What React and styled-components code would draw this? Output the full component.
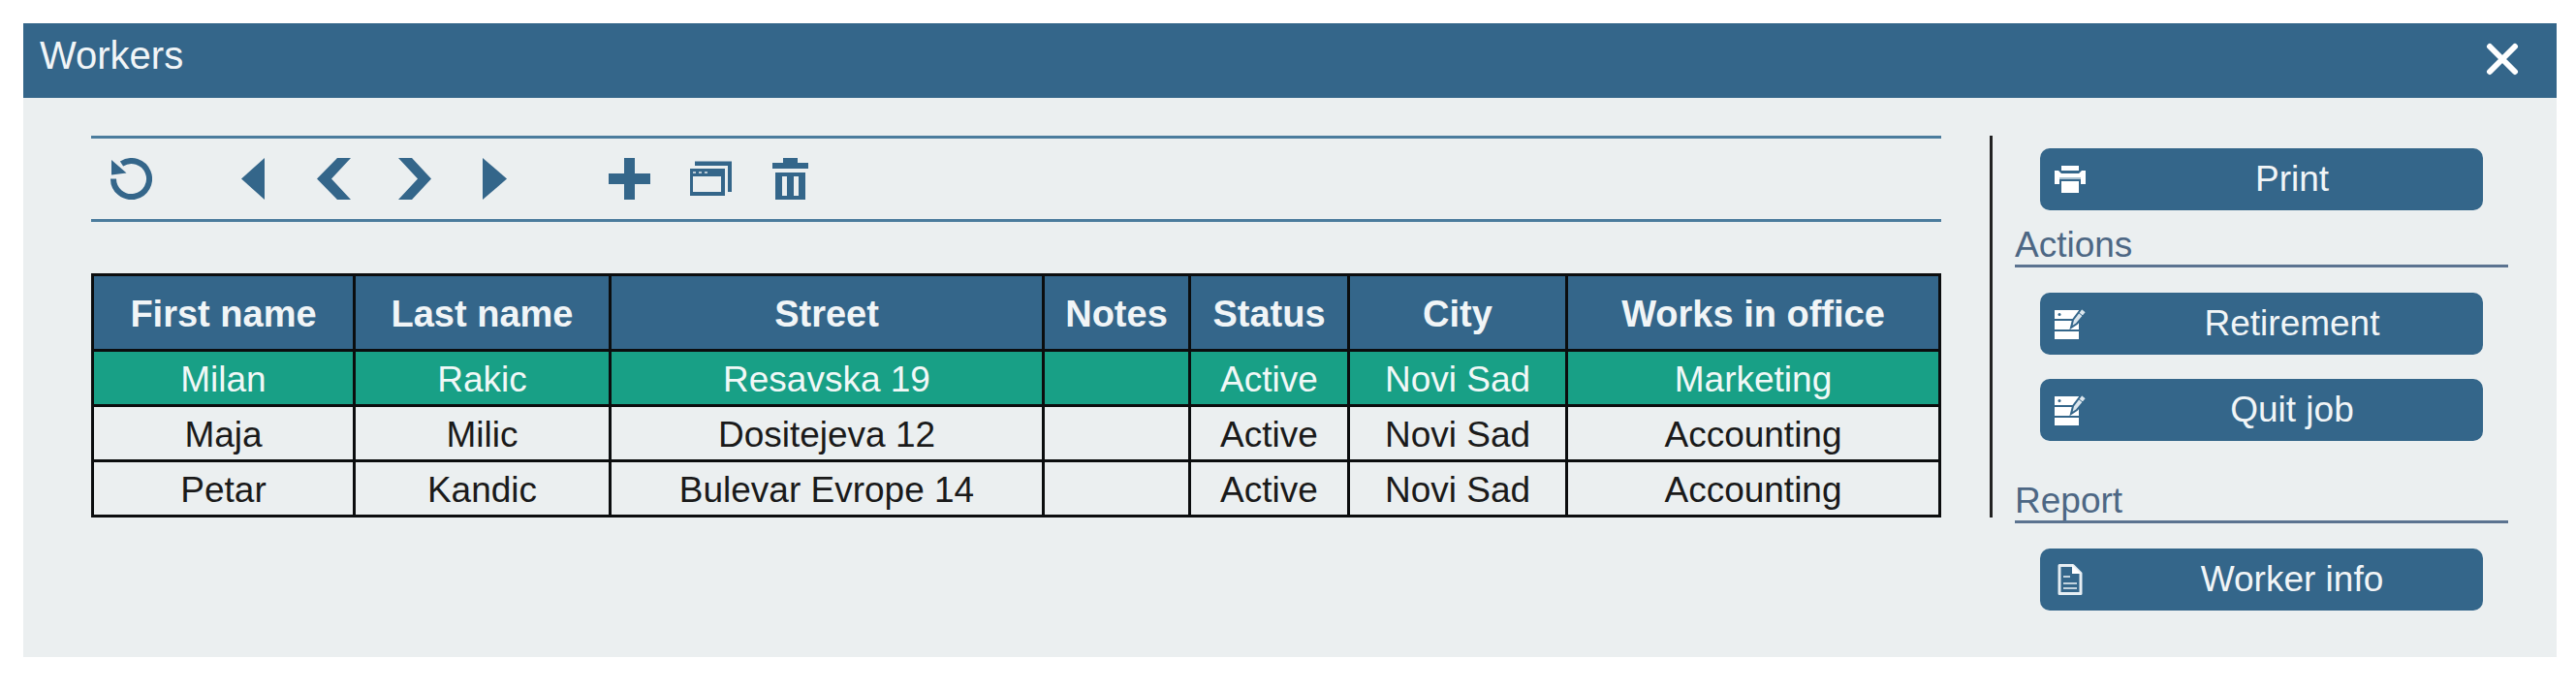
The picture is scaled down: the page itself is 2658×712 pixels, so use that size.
import styled, { createGlobalStyle } from 'styled-components';

const blue = '#34668a';

const GlobalStyle = createGlobalStyle`
  * {
    box-sizing: border-box;
  }

  body {
    margin: 0;
    padding: 24px 20px 34px 24px;
    background: #fff;
    font-family: "Liberation Sans", Arial, sans-serif;
    font-size: 37px;
    line-height: 44px;
  }
`

const Window = styled.section`
  background: #ebeff0;
`

const TitleBar = styled.header`
  display: flex;
  align-items: center;
  justify-content: space-between;
  height: 77px;
  padding: 0 39px 4px 17px;
  background: ${blue};
`

const Title = styled.h1`
  margin: 0;
  padding-bottom: 8px;
  color: #f1f5f7;
  font-size: 40px;
  font-weight: normal;
  line-height: 44px;
`

const IconButton = styled.button`
  display: flex;
  padding: 0;
  border: 0;
  background: none;
  color: ${({ $color }) => $color || blue};
  cursor: pointer;
`

const Content = styled.div`
  display: flex;
  align-items: flex-start;
  padding: 39px 50px 48px 70px;
`

const Main = styled.main`
  flex: 1;
  padding-right: 50px;
  border-right: 3px solid #222;
`

const Toolbar = styled.div`
  display: flex;
  align-items: center;
  height: 89px;
  margin-bottom: 53px;
  padding-left: 20px;
  border-top: 3px solid #4b7c9d;
  border-bottom: 3px solid #4b7c9d;
`

const ToolGroup = styled.div`
  display: flex;
  gap: 41px;
  margin-left: ${({ $space }) => $space || 0}px;
`

const Table = styled.table`
  width: 100%;
  table-layout: fixed;
  border-collapse: collapse;
  text-align: center;
`

const Col = styled.col`
  width: ${({ $width }) => $width}px;
`

const HeadCell = styled.th`
  height: 78px;
  padding: 2px 0 0;
  border: 3px solid #0b0d0e;
  background: ${blue};
  color: #f1f5f7;
  font-size: 38px;
`

const Row = styled.tr`
  background: ${({ $selected }) => ($selected ? '#18a086' : 'transparent')};
  color: ${({ $selected }) => ($selected ? '#f1f8f7' : '#1a1a1a')};
`

const Cell = styled.td`
  height: 57px;
  padding: 4px 0 0;
  border: 3px solid #0b0d0e;
`

const Sidebar = styled.aside`
  width: 532px;
  padding: 13px 0 0 23px;
`

const SideHeading = styled.h2`
  margin: ${({ $top }) => $top}px 0 26px;
  border-bottom: 3px solid #5b7390;
  color: #4d6784;
  font-size: 37px;
  font-weight: normal;
  line-height: 40px;
`

const ButtonStack = styled.div`
  display: flex;
  flex-direction: column;
  gap: 25px;
  padding: 0 26px;
`

const ActionButton = styled.button`
  display: flex;
  align-items: center;
  height: 64px;
  padding: 0 0 0 15px;
  border: 0;
  border-radius: 10px;
  background: ${blue};
  color: #f1f5f7;
  font: inherit;
  cursor: pointer;
`

const ActionLabel = styled.span`
  flex: 1;
  padding-left: 16px;
`

const ToolSvg = ({ children }) => (
  <svg width="43" height="43" viewBox="0 0 43 43" fill="currentColor" aria-hidden="true">{children}</svg>
)

const ActionSvg = ({ children }) => (
  <svg width="32" height="32" viewBox="0 0 32 32" fill="#fff" aria-hidden="true">{children}</svg>
)

const icons = {
  refresh: (
    <ToolSvg>
      <path d="M3 21.500A18.500 18.500 0 1 0 11.500 6" fill="none" stroke="currentColor" strokeWidth="6" />
      <path d="M1 2v15.500l15.500-2z" />
    </ToolSvg>
  ),
  first: <ToolSvg><path d="M34 0v43L10 21.500z" /></ToolSvg>,
  prev: <ToolSvg><path d="M25 0h14L19 21.500 39 43H25L4 21.500z" /></ToolSvg>,
  next: <ToolSvg><path d="M4 0h14l20 21.500L18 43H4l20-21.500z" /></ToolSvg>,
  last: <ToolSvg><path d="M7 0v43l25-21.500z" /></ToolSvg>,
  add: <ToolSvg><path d="M16 0h11v16h16v11H27v16H16V27H0V16h16z" /></ToolSvg>,
  windows: (
    <ToolSvg>
      <path d="M5 3.500h38V35h-4V8H5z" />
      <path fillRule="evenodd" d="M0 11h36v28H0zM3 19v16h29V19z" />
      <path d="M3 14h3v2H3zM9 14h3v2H9zM15 14h3v2h-3z" fill="#b9cad6" />
    </ToolSvg>
  ),
  trash: (
    <ToolSvg>
      <path d="M12 0h15v5h11v6H1V5h11z" />
      <path fillRule="evenodd" d="M4 15h31v28H4zM11 19v20h5V19zM23 19v20h5V19z" />
    </ToolSvg>
  ),
  print: (
    <ActionSvg>
      <path d="M7 2h18v5H7z" />
      <path d="M0 7h4l3 3h18l3-3h4v14h-5v-6H5v6H0z" />
      <path d="M5 14h22v2H5z" fill="#a9c1d1" />
      <path d="M7 18h18v12H7z" />
    </ActionSvg>
  ),
  edit: (
    <ActionSvg>
      <path d="M0 2h25v9H0zM0 13h25v9H0zM0 24h25v8H0z" />
      <path d="M28 0l5 4-10 12-6 4 2-8z" stroke={blue} strokeWidth="2" fill="#dbe6ed" />
      <path d="M24 4l5 4" stroke={blue} strokeWidth="1" />
      <circle cx="5" cy="6.500" r="1.500" fill={blue} />
    </ActionSvg>
  ),
  report: (
    <ActionSvg>
      <path d="M5 1.500h14l8 8v21H5z" fill="none" stroke="#e6eef3" strokeWidth="3" strokeLinejoin="round" />
      <path d="M18 1l9 9h-9z" />
      <path d="M9 12h7v2H9zM9 19h14v2H9zM9 24h14v2H9z" fill="#c2d3de" />
    </ActionSvg>
  ),
}

const toolGroups = [
  { space: 0, tools: [['refresh', 'Refresh']] },
  { space: 82, tools: [['first', 'First'], ['prev', 'Previous'], ['next', 'Next'], ['last', 'Last']] },
  { space: 94, tools: [['add', 'Add'], ['windows', 'Open'], ['trash', 'Delete']] },
]

const columns = [
  ['First name', 270],
  ['Last name', 264],
  ['Street', 447],
  ['Notes', 151],
  ['Status', 164],
  ['City', 225],
  ['Works in office', 385],
]

const workers = [
  ['Milan', 'Rakic', 'Resavska 19', '', 'Active', 'Novi Sad', 'Marketing'],
  ['Maja', 'Milic', 'Dositejeva 12', '', 'Active', 'Novi Sad', 'Accounting'],
  ['Petar', 'Kandic', 'Bulevar Evrope 14', '', 'Active', 'Novi Sad', 'Accounting'],
]

const Action = ({ icon, children }) => (
  <ActionButton type="button">
    {icons[icon]}
    <ActionLabel>{children}</ActionLabel>
  </ActionButton>
)

export default function App() {
  return (
    <>
      <GlobalStyle />
      <Window>
        <TitleBar>
          <Title>Workers</Title>
          <IconButton type="button" aria-label="Close" $color="#fff">
            <svg width="34" height="34" viewBox="0 0 34 34" aria-hidden="true">
              <path d="M4 4l26 26M30 4L4 30" stroke="currentColor" strokeWidth="6" strokeLinecap="round" />
            </svg>
          </IconButton>
        </TitleBar>
        <Content>
          <Main>
            <Toolbar>
              {toolGroups.map(({ space, tools }) => (
                <ToolGroup key={tools[0][0]} $space={space}>
                  {tools.map(([icon, label]) => (
                    <IconButton key={icon} type="button" aria-label={label}>{icons[icon]}</IconButton>
                  ))}
                </ToolGroup>
              ))}
            </Toolbar>
            <Table>
              <colgroup>
                {columns.map(([name, width]) => <Col key={name} $width={width} />)}
              </colgroup>
              <thead>
                <tr>
                  {columns.map(([name]) => <HeadCell key={name} scope="col">{name}</HeadCell>)}
                </tr>
              </thead>
              <tbody>
                {workers.map((worker, i) => (
                  <Row key={worker[0]} $selected={i === 0}>
                    {worker.map((value, j) => <Cell key={j}>{value}</Cell>)}
                  </Row>
                ))}
              </tbody>
            </Table>
          </Main>
          <Sidebar>
            <ButtonStack>
              <Action icon="print">Print</Action>
            </ButtonStack>
            <SideHeading $top={16}>Actions</SideHeading>
            <ButtonStack>
              <Action icon="edit">Retirement</Action>
              <Action icon="edit">Quit job</Action>
            </ButtonStack>
            <SideHeading $top={42}>Report</SideHeading>
            <ButtonStack>
              <Action icon="report">Worker info</Action>
            </ButtonStack>
          </Sidebar>
        </Content>
      </Window>
    </>
  );
}
